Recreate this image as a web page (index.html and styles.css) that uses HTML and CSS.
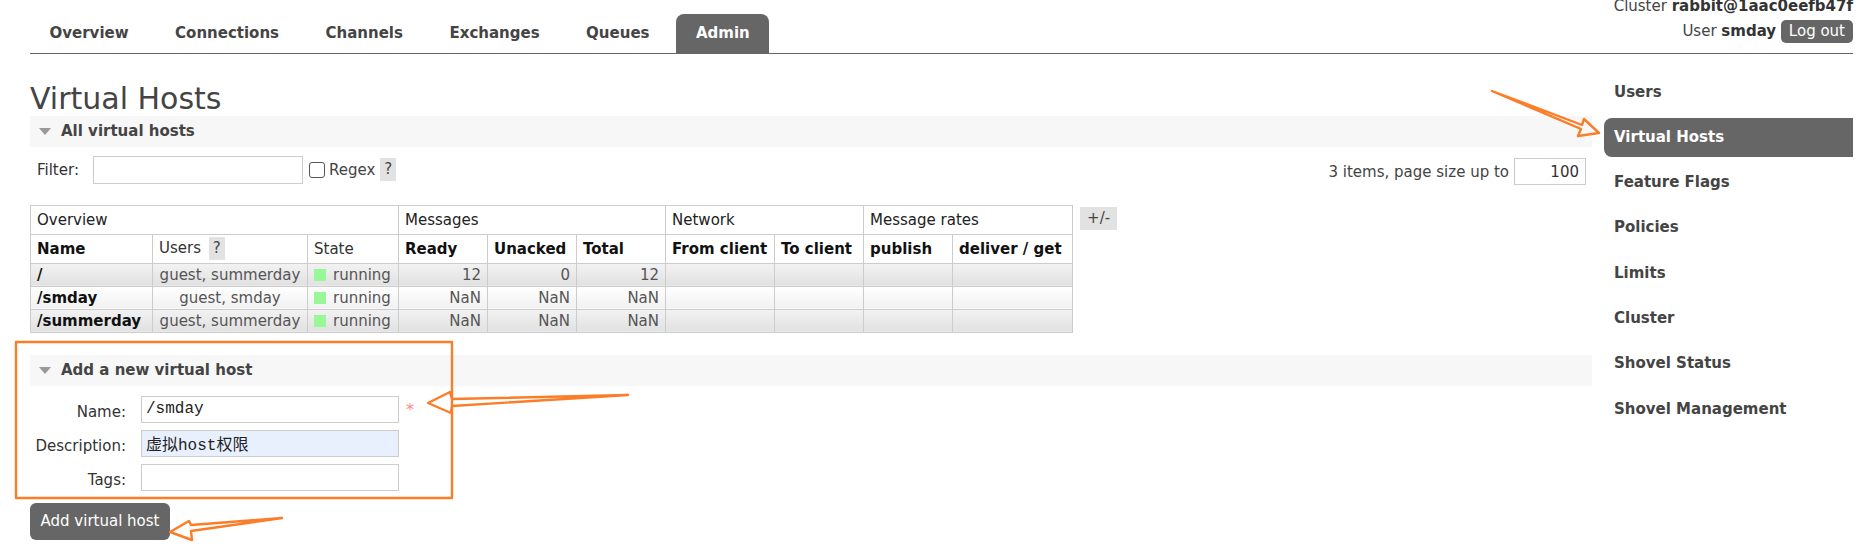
FILE: index.html
```html
<!DOCTYPE html>
<html>
<head>
<meta charset="utf-8">
<title>RabbitMQ Management</title>
<link rel="stylesheet" href="styles.css">
</head>
<body>
<div class="header">
  <ul class="tabs">
    <li>Overview</li>
    <li>Connections</li>
    <li>Channels</li>
    <li>Exchanges</li>
    <li>Queues</li>
    <li class="active">Admin</li>
  </ul>
  <div class="status">
    <div class="status-line">Cluster <b>rabbit@1aac0eefb47f</b></div>
    <div class="status-line">User <b>smday</b> <span class="logout">Log out</span></div>
  </div>
</div>

<div class="main">
  <div class="content">
    <h1>Virtual Hosts</h1>

    <div class="section">
      <h2><span class="tri"></span>All virtual hosts</h2>
      <div class="filter-row">
        <div class="filter-left">
          <span class="lbl">Filter:</span>
          <input class="filter-input" type="text">
          <input class="chk" type="checkbox">
          <span class="regex">Regex</span>
          <span class="help">?</span>
        </div>
        <div class="filter-right">
          <span>3 items, page size up to</span>
          <input class="page-size" type="text" value="100">
        </div>
      </div>

      <div class="table-wrap">
        <table class="list">
          <colgroup>
            <col class="c-name"><col class="c-users"><col class="c-state">
            <col class="c-num"><col class="c-num"><col class="c-num">
            <col class="c-from"><col class="c-num"><col class="c-num"><col class="c-deliver">
          </colgroup>
          <thead>
            <tr class="group">
              <th colspan="3">Overview</th>
              <th colspan="3">Messages</th>
              <th colspan="2">Network</th>
              <th colspan="2">Message rates</th>
            </tr>
            <tr class="cols">
              <th>Name</th>
              <th class="normal">Users <span class="help">?</span></th>
              <th class="normal">State</th>
              <th>Ready</th>
              <th>Unacked</th>
              <th>Total</th>
              <th>From client</th>
              <th>To client</th>
              <th>publish</th>
              <th>deliver / get</th>
            </tr>
          </thead>
          <tbody>
            <tr class="alt1">
              <td class="name">/</td>
              <td class="center">guest, summerday</td>
              <td><span class="dot"></span>running</td>
              <td class="r">12</td><td class="r">0</td><td class="r">12</td>
              <td></td><td></td><td></td><td></td>
            </tr>
            <tr class="alt2">
              <td class="name">/smday</td>
              <td class="center">guest, smday</td>
              <td><span class="dot"></span>running</td>
              <td class="r">NaN</td><td class="r">NaN</td><td class="r">NaN</td>
              <td></td><td></td><td></td><td></td>
            </tr>
            <tr class="alt1">
              <td class="name">/summerday</td>
              <td class="center">guest, summerday</td>
              <td><span class="dot"></span>running</td>
              <td class="r">NaN</td><td class="r">NaN</td><td class="r">NaN</td>
              <td></td><td></td><td></td><td></td>
            </tr>
          </tbody>
        </table>
        <span class="plusminus">+/-</span>
      </div>
    </div>

    <div class="section section-add">
      <h2><span class="tri"></span>Add a new virtual host</h2>
      <div class="form">
        <label>Name:</label>
        <input class="field mono" type="text" value="/smday">
        <span class="req">*</span>
        <label>Description:</label>
        <input class="field mono autofill" type="text" value="虚拟host权限">
        <span></span>
        <label>Tags:</label>
        <input class="field mono" type="text">
        <span></span>
      </div>
      <button class="btn">Add virtual host</button>
    </div>
  </div>

  <ul class="sidebar">
    <li>Users</li>
    <li class="selected">Virtual Hosts</li>
    <li>Feature Flags</li>
    <li>Policies</li>
    <li>Limits</li>
    <li>Cluster</li>
    <li>Shovel Status</li>
    <li>Shovel Management</li>
  </ul>
</div>

<svg class="annot" width="1871" height="546" viewBox="0 0 1871 546">
  <g fill="none" stroke="#fb7d28" stroke-width="2.4" stroke-linejoin="round" stroke-linecap="round">
    <rect x="16" y="342" width="436" height="156"/>
    <path d="M1492,91 L1582,125 L1584,119 L1599,133 L1578,136 L1581,129 Z"/>
    <path d="M628,395 L452,399 L450,392 L428,403 L451,413 L452,406 Z"/>
    <path d="M282,518 L191,525 L189,521 L170,532 L192,540 L191,531 Z"/>
  </g>
</svg>
</body>
</html>
```

FILE: styles.css
```css
html, body {
  margin: 0;
  padding: 0;
  background: #fff;
}
body {
  font-family: "DejaVu Sans", Verdana, sans-serif;
  font-size: 15px;
  color: #444;
  position: relative;
  width: 1871px;
  height: 546px;
  overflow: hidden;
}

/* header */
.header {
  display: flex;
  justify-content: space-between;
  align-items: flex-start;
  margin: 0 18px 0 30px;
  height: 52.5px;
  border-bottom: 1.5px solid #666;
}
.tabs {
  list-style: none;
  margin: 14px 0 0 0;
  padding: 0;
  display: flex;
  gap: 7.5px;
}
.tabs li {
  height: 38.5px;
  line-height: 38px;
  padding: 0 19.5px;
  font-weight: bold;
  color: #444;
  border-radius: 8px 8px 0 0;
}
.tabs li.active {
  background: #666;
  color: #fff;
}
.status {
  margin-top: -3px;
  text-align: right;
  color: #444;
}
.status-line {
  line-height: 19px;
}
.status-line + .status-line {
  margin-top: 4px;
}
.status b { color: #333; }
.logout {
  display: inline-block;
  background: #666;
  color: #fff;
  border-radius: 5px;
  padding: 0 8px;
  line-height: 23px;
  height: 23px;
}

/* main */
.main {
  display: flex;
}
.content {
  width: 1562px;
  margin-left: 30px;
}
h1 {
  font-size: 30px;
  font-weight: normal;
  line-height: 34px;
  margin: 28px 0 0 0;
  color: #444;
}
.section h2 {
  margin: 0;
  height: 31px;
  line-height: 31px;
  background: #f7f7f7;
  font-size: 15px;
  font-weight: bold;
  color: #444;
  display: flex;
  align-items: center;
  padding-left: 9px;
}
.tri {
  width: 0;
  height: 0;
  border-left: 6px solid transparent;
  border-right: 6px solid transparent;
  border-top: 7px solid #999;
  margin-right: 10px;
  margin-top: 1px;
}

.filter-row {
  display: flex;
  justify-content: space-between;
  margin-top: 9px;
  height: 28px;
}
.filter-left {
  display: flex;
  align-items: center;
  padding-left: 7px;
}
.lbl { margin-right: 14px; color: #333; }
.filter-input {
  width: 210px;
  height: 28px;
  box-sizing: border-box;
  border: 1px solid #ccc;
  margin: 0;
}
.chk {
  appearance: none;
  -webkit-appearance: none;
  width: 16px;
  height: 16px;
  box-sizing: border-box;
  border: 1px solid #555;
  border-radius: 3px;
  margin: 0 4px 0 6px;
  background: #fff;
}
.regex { color: #444; }
.help {
  display: inline-block;
  background: #e2e2e2;
  padding: 0 4px;
  line-height: 23px;
  margin-left: 5px;
  color: #444;
}
.filter-right {
  display: flex;
  align-items: center;
  margin-top: 4px;
  margin-right: 6px;
  gap: 5px;
  color: #444;
}
.page-size {
  width: 72px;
  height: 27px;
  box-sizing: border-box;
  border: 1px solid #ccc;
  text-align: right;
  font-family: "DejaVu Sans", sans-serif;
  font-size: 15px;
  color: #333;
  padding: 0 6px;
  margin: 0;
}

.table-wrap {
  display: flex;
  align-items: flex-start;
  margin-top: 21px;
}
table.list {
  border-collapse: collapse;
  table-layout: fixed;
  width: 1043px;
}
.c-name { width: 122px; }
.c-users { width: 155px; }
.c-state { width: 91px; }
.c-num { width: 89px; }
.c-from { width: 109px; }
.c-deliver { width: 120px; }
table.list th, table.list td {
  border: 1px solid #ccc;
  text-align: left;
  padding: 0 6px;
  white-space: nowrap;
  overflow: hidden;
}
table.list tr.group th {
  font-weight: normal;
  height: 28px;
  color: #222;
}
table.list tr.cols th {
  height: 28px;
  font-weight: bold;
  color: #111;
}
table.list tr.cols th.normal {
  font-weight: normal;
  color: #333;
}
table.list tr.cols th .help {
  margin-left: 3px;
}
table.list td {
  height: 22px;
  color: #555;
}
table.list td.name {
  font-weight: bold;
  color: #111;
}
table.list td.center { text-align: center; }
table.list td.r { text-align: right; }
table.list tr.alt1 td {
  background: linear-gradient(#f2f2f2, #e1e1e1);
}
table.list tr.alt2 td {
  background: linear-gradient(#ffffff, #f1f1f1);
}
.dot {
  display: inline-block;
  width: 12px;
  height: 12px;
  background: #98f898;
  margin-right: 7px;
  vertical-align: -1px;
}
.plusminus {
  display: inline-block;
  margin-left: 7px;
  margin-top: 2px;
  background: #e2e2e2;
  padding: 0 7px;
  line-height: 23px;
  color: #444;
}

.section-add {
  margin-top: 22px;
}
.form {
  display: grid;
  grid-template-columns: 96px 258px auto;
  column-gap: 15px;
  row-gap: 7px;
  margin-top: 10px;
  align-items: center;
}
.form label {
  text-align: right;
  color: #333;
  padding-top: 6px;
}
.field {
  width: 258px;
  height: 27px;
  box-sizing: border-box;
  border: 1px solid #ccc;
  margin: 0;
  padding: 0 4px;
  color: #222;
  background: #fff;
}
.mono {
  font-family: "Liberation Mono", "Noto Sans CJK SC", monospace;
  font-size: 16px;
}
.field.autofill {
  background: #e8f0fe;
}
.req {
  color: #f88;
  margin-left: -8px;
  font-size: 16px;
}
.btn {
  display: block;
  margin-top: 12px;
  width: 140px;
  height: 37px;
  border: none;
  border-radius: 6px;
  background: #666;
  color: #fff;
  font-family: "DejaVu Sans", Verdana, sans-serif;
  font-size: 15px;
  padding: 0;
}

/* sidebar */
.sidebar {
  list-style: none;
  margin: 19px 0 0 12px;
  padding: 0;
  width: 249px;
}
.sidebar li {
  height: 39px;
  line-height: 39px;
  margin-bottom: 6.3px;
  padding-left: 10px;
  font-weight: bold;
  color: #444;
  border-radius: 8px 0 0 8px;
}
.sidebar li.selected {
  background: #666;
  color: #fff;
}

.annot {
  position: absolute;
  left: 0;
  top: 0;
  pointer-events: none;
}
```
